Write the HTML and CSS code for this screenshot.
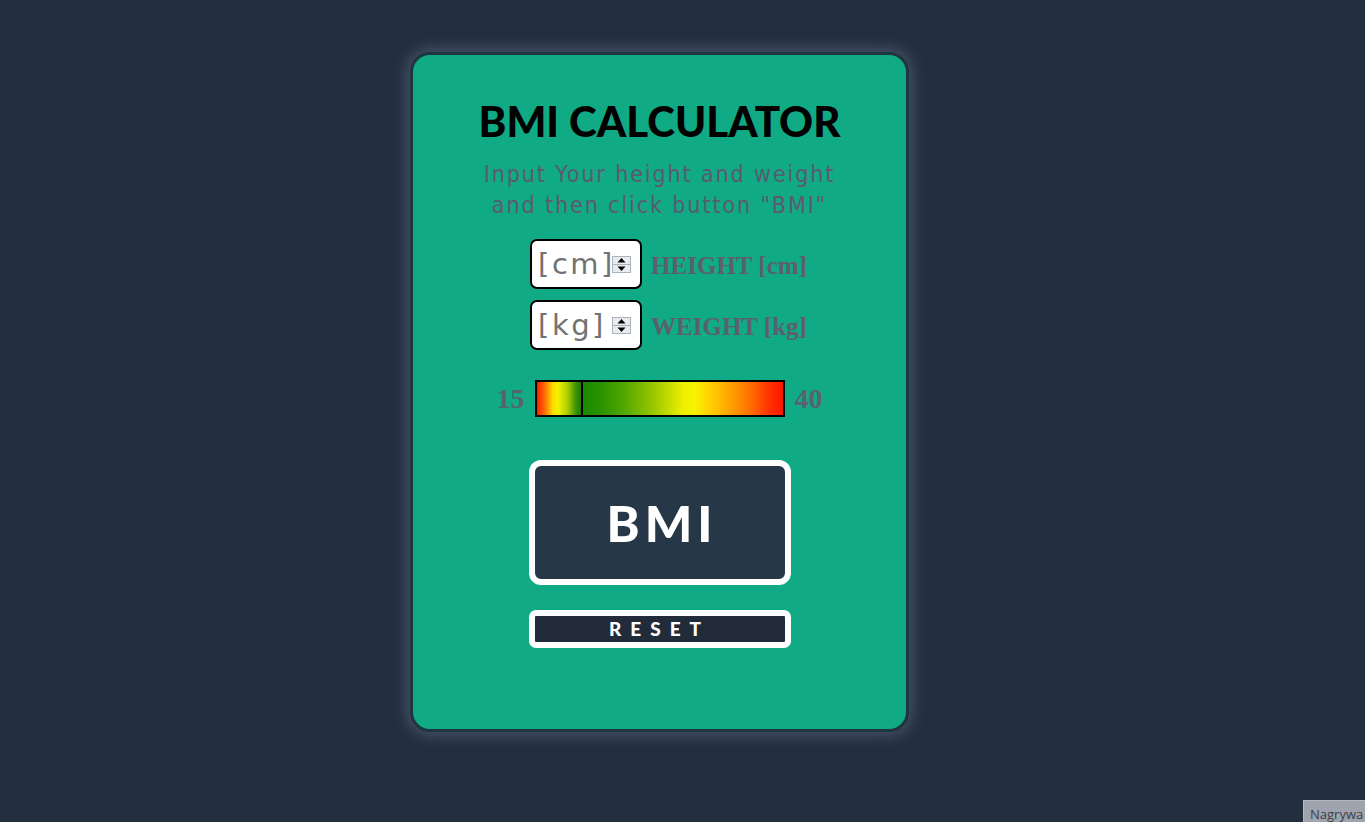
FILE: index.html
```html
<!DOCTYPE html>
<html lang="pl">
<head>
<meta charset="utf-8">
<title>BMI Calculator</title>
<link rel="stylesheet" href="styles.css">
</head>
<body>
  <main class="card">
    <h1 class="title">BMI CALCULATOR</h1>
    <p class="subtitle">Input Your height and weight<br>and then click button "BMI"</p>

    <div class="field-row">
      <div class="num-box">
        <input class="num-input" type="text" placeholder="[cm]">
        <svg class="spin" width="19" height="17" viewBox="0 0 19 17">
          <rect x="0.5" y="0.5" width="18" height="16" fill="#e9ebee" stroke="#a9b2bd"/>
          <line x1="0.5" y1="8.5" x2="18.5" y2="8.5" stroke="#a9b2bd"/>
          <polygon points="5.5,6.5 13.5,6.5 9.5,2" fill="#000"/>
          <polygon points="5.5,10.5 13.5,10.5 9.5,15" fill="#000"/>
        </svg>
      </div>
      <span class="field-label">HEIGHT [cm]</span>
    </div>

    <div class="field-row">
      <div class="num-box">
        <input class="num-input" type="text" placeholder="[kg]">
        <svg class="spin" width="19" height="17" viewBox="0 0 19 17">
          <rect x="0.5" y="0.5" width="18" height="16" fill="#e9ebee" stroke="#a9b2bd"/>
          <line x1="0.5" y1="8.5" x2="18.5" y2="8.5" stroke="#a9b2bd"/>
          <polygon points="5.5,6.5 13.5,6.5 9.5,2" fill="#000"/>
          <polygon points="5.5,10.5 13.5,10.5 9.5,15" fill="#000"/>
        </svg>
      </div>
      <span class="field-label">WEIGHT [kg]</span>
    </div>

    <div class="scale-row">
      <span class="scale-num">15</span>
      <div class="scale-bar">
        <div class="scale-left"></div>
        <div class="scale-marker"></div>
        <div class="scale-right"></div>
      </div>
      <span class="scale-num">40</span>
    </div>

    <button class="btn-bmi" type="button">BMI</button>
    <button class="btn-reset" type="button">RESET</button>
  </main>

  <div class="rec-badge">Nagrywa</div>
</body>
</html>
```

FILE: styles.css
```css
html, body {
  margin: 0;
  padding: 0;
}

body {
  background: #232e3f;
  min-height: 822px;
  overflow: hidden;
  font-family: "Lato", "Liberation Sans", sans-serif;
}

.card {
  box-sizing: border-box;
  width: 499px;
  height: 680px;
  margin: 52px 0 0 410px;
  background: #10aa85;
  border: 3px solid #1d3640;
  border-radius: 20px;
  box-shadow: 0 0 14px 4px rgba(98, 110, 132, 0.55);
  display: flex;
  flex-direction: column;
  align-items: center;
  padding-top: 40px;
}

.title {
  margin: 0;
  font-family: "Lato", sans-serif;
  font-weight: 900;
  font-size: 42px;
  line-height: 52px;
  letter-spacing: 0;
  color: #000;
}

.subtitle {
  margin: 12px 0 0;
  text-align: center;
  font-family: "Liberation Sans Narrow", "DejaVu Sans Condensed", sans-serif;
  font-size: 23px;
  line-height: 31px;
  letter-spacing: 1.9px;
  color: #5c5a6e;
}

.field-row {
  display: flex;
  align-items: center;
  gap: 9px;
  margin-left: 18px;
}

.field-row + .field-row {
  margin-top: 11px;
}

.subtitle + .field-row {
  margin-top: 18px;
}

.num-box {
  box-sizing: border-box;
  width: 112px;
  height: 50px;
  background: #fff;
  border: 2px solid #000;
  border-radius: 7px;
  display: flex;
  align-items: center;
  padding: 0 9px 0 6px;
}

.num-input {
  width: 74px;
  min-width: 0;
  border: 0;
  padding: 0;
  margin: 0;
  outline: none;
  background: transparent;
  font-family: "DejaVu Sans", sans-serif;
  font-size: 29px;
  letter-spacing: 2.5px;
  color: #6e6e6e;
}

.num-input::placeholder {
  color: #727272;
  opacity: 1;
}

.spin {
  flex: none;
  display: block;
  margin-left: auto;
}

.field-label {
  font-family: "Liberation Serif", serif;
  font-weight: 700;
  font-size: 25px;
  color: #5b5f6e;
  white-space: nowrap;
  padding-top: 3px;
}

.scale-row {
  display: flex;
  align-items: center;
  gap: 10px;
  margin-top: 30px;
}

.scale-num {
  font-family: "Liberation Serif", serif;
  font-weight: 700;
  font-size: 28px;
  color: #5a6170;
}

.scale-bar {
  box-sizing: border-box;
  width: 250px;
  height: 37px;
  border: 2px solid #000;
  display: flex;
}

.scale-left {
  width: 44px;
  background: linear-gradient(to right, #ff1a00 0%, #ff7a00 20%, #ffd800 35%, #f2f200 48%, #a8cc00 70%, #3c9500 88%, #1a7c00 100%);
}

.scale-marker {
  width: 2px;
  background: #000;
}

.scale-right {
  flex: 1;
  background: linear-gradient(to right, #1a8800 0%, #2c9400 10%, #58aa00 22%, #8fc200 33%, #c4dc00 43%, #eef000 50%, #f8f200 56%, #ffd600 62%, #ffb400 70%, #ff8c00 78%, #ff6000 86%, #ff3200 93%, #ff1600 100%);
}

.btn-bmi {
  box-sizing: border-box;
  width: 262px;
  height: 125px;
  margin-top: 43px;
  background: #263748;
  border: 6px solid #fff;
  border-radius: 12px;
  color: #fff;
  font-family: "Lato", sans-serif;
  font-weight: 900;
  font-size: 50px;
  letter-spacing: 5px;
  padding: 0 0 0 5px;
  cursor: pointer;
}

.btn-reset {
  box-sizing: border-box;
  width: 262px;
  height: 38px;
  margin-top: 25px;
  background: #222b3a;
  border: 6px solid #fff;
  border-radius: 7px;
  color: #fff;
  font-family: "Lato", sans-serif;
  font-weight: 900;
  font-size: 19px;
  line-height: 20px;
  letter-spacing: 9px;
  padding: 0;
  cursor: pointer;
}

.rec-badge {
  position: fixed;
  right: 0;
  bottom: 0;
  width: 62px;
  height: 22px;
  box-sizing: border-box;
  padding: 5px 0 0 6px;
  background: #9fa3ad;
  border-top: 1px solid #b5b9c2;
  border-left: 1px solid #b5b9c2;
  font-family: "Open Sans", sans-serif;
  font-size: 13px;
  line-height: 16px;
  color: #3a3f4a;
  white-space: nowrap;
  overflow: hidden;
}
```
